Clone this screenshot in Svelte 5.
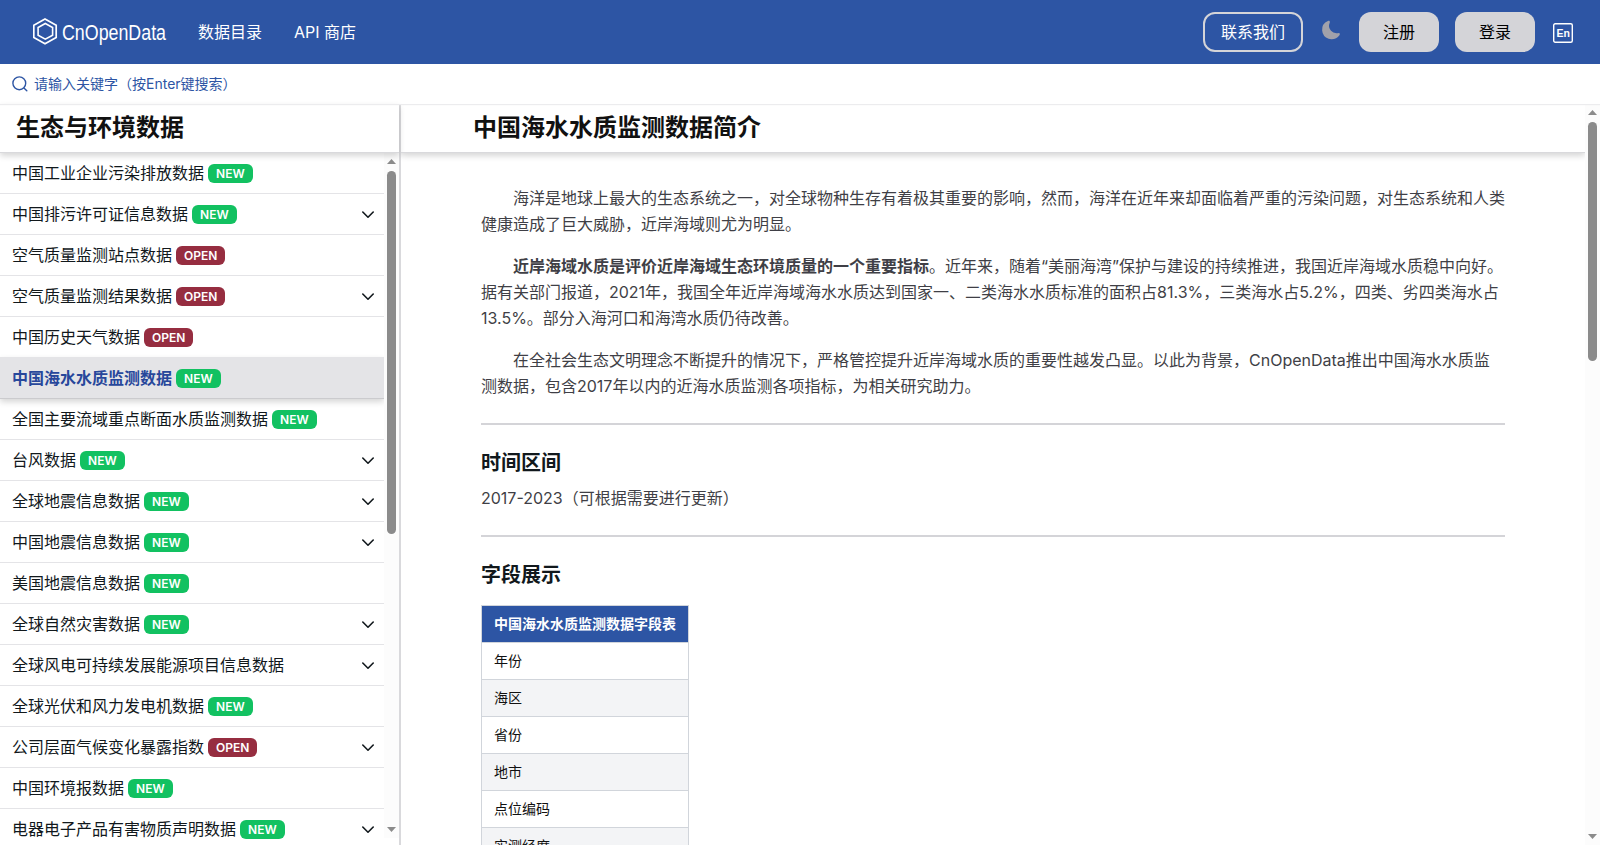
<script>
  let active = $state('中国海水水质监测数据');

  const menu = [
    { name: '中国工业企业污染排放数据', tag: 'new' },
    { name: '中国排污许可证信息数据', tag: 'new', children: true },
    { name: '空气质量监测站点数据', tag: 'open' },
    { name: '空气质量监测结果数据', tag: 'open', children: true },
    { name: '中国历史天气数据', tag: 'open' },
    { name: '中国海水水质监测数据', tag: 'new' },
    { name: '全国主要流域重点断面水质监测数据', tag: 'new' },
    { name: '台风数据', tag: 'new', children: true },
    { name: '全球地震信息数据', tag: 'new', children: true },
    { name: '中国地震信息数据', tag: 'new', children: true },
    { name: '美国地震信息数据', tag: 'new' },
    { name: '全球自然灾害数据', tag: 'new', children: true },
    { name: '全球风电可持续发展能源项目信息数据', children: true },
    { name: '全球光伏和风力发电机数据', tag: 'new' },
    { name: '公司层面气候变化暴露指数', tag: 'open', children: true },
    { name: '中国环境报数据', tag: 'new' },
    { name: '电器电子产品有害物质声明数据', tag: 'new', children: true }
  ];

  const fields = ['年份', '海区', '省份', '地市', '点位编码', '实测经度'];
</script>

{#snippet scrollbar(size)}
  <div class="scrollbar">
    <svg class="arrow" viewBox="0 0 9 5"><path d="M0 5 4.5 0 9 5z" /></svg>
    <div class="track"><div class="thumb" style="height: {size}px"></div></div>
    <svg class="arrow" viewBox="0 0 9 5"><path d="M0 0h9L4.5 5z" /></svg>
  </div>
{/snippet}

<div class="page">
  <header class="navbar">
    <svg class="logo" viewBox="0 0 136 30" width="136" height="30">
      <g fill="none" stroke="#fff">
        <path stroke-width="1.7" d="M12 1.9 23.2 8.2v12.3L12 26.8.8 20.5V8.2z" />
        <path stroke-width="1.6" d="M12.3 6.5 19.6 10.5v7.7l-7.3 4-7.2-4v-7.7z" />
      </g>
      <text x="29" y="22.5" textLength="104" lengthAdjust="spacingAndGlyphs">CnOpenData</text>
    </svg>
    <nav>
      <a href="#catalog">数据目录</a>
      <a href="#api">API 商店</a>
    </nav>
    <div class="actions">
      <button class="btn outline">联系我们</button>
      <svg class="moon" viewBox="0 0 24 24" width="22" height="22">
        <path
          d="M21.53 15.93c-.16-.27-.61-.69-1.73-.49a8.46 8.46 0 0 1-1.88.13 8.41 8.41 0 0 1-5.91-2.82 8.07 8.07 0 0 1-1.44-8.66c.44-1.01.13-1.54-.09-1.76s-.77-.55-1.83-.11a10.32 10.32 0 0 0-6.32 10.21 10.48 10.48 0 0 0 7.04 8.99 10 10 0 0 0 2.89.55c.16.01.32.02.48.02a10.5 10.5 0 0 0 8.47-4.27c.67-.93.49-1.52.32-1.79z"
        />
      </svg>
      <button class="btn solid">注册</button>
      <button class="btn solid">登录</button>
      <svg class="lang" viewBox="0 0 20 20" width="20" height="20">
        <rect x="0.7" y="0.7" width="18.6" height="18.6" rx="1.5" />
        <text x="3.4" y="14" textLength="13.4" lengthAdjust="spacingAndGlyphs">En</text>
      </svg>
    </div>
  </header>

  <div class="search">
    <svg viewBox="0 0 16 16" width="16" height="16">
      <circle cx="7.3" cy="7.3" r="6.4" />
      <path d="m12.2 12.2 2.6 2.6" />
    </svg>
    <span>请输入关键字（按Enter键搜索）</span>
  </div>

  <div class="body">
    <aside class="sidebar">
      <h2>生态与环境数据</h2>
      <div class="list">
        <ul>
          {#each menu as item}
            <li class:active={item.name === active}>
              <span class="name">{item.name}</span>
              {#if item.tag}
                <span class="tag {item.tag}">{item.tag.toUpperCase()}</span>
              {/if}
              {#if item.children}
                <svg class="chevron" viewBox="0 0 12 8" width="12" height="8">
                  <path d="m0.8 1 5.2 5.2L11.2 1" />
                </svg>
              {/if}
            </li>
          {/each}
        </ul>
        {@render scrollbar(363)}
      </div>
    </aside>

    <main>
      <div class="content">
        <h1>中国海水水质监测数据简介</h1>
        <article>
          <p class="indent">海洋是地球上最大的生态系统之一，对全球物种生存有着极其重要的影响，然而，海洋在近年来却面临着严重的污染问题，对生态系统和人类健康造成了巨大威胁，近岸海域则尤为明显。</p>
          <p class="indent"><strong>近岸海域水质是评价近岸海域生态环境质量的一个重要指标</strong>。近年来，随着“美丽海湾”保护与建设的持续推进，我国近岸海域水质稳中向好。据有关部门报道，2021年，我国全年近岸海域海水水质达到国家一、二类海水水质标准的面积占81.3%，三类海水占5.2%，四类、劣四类海水占13.5%。部分入海河口和海湾水质仍待改善。</p>
          <p class="indent">在全社会生态文明理念不断提升的情况下，严格管控提升近岸海域水质的重要性越发凸显。以此为背景，CnOpenData推出中国海水水质监测数据，包含2017年以内的近海水质监测各项指标，为相关研究助力。</p>
          <hr />
          <h3>时间区间</h3>
          <p class="range">2017-2023（可根据需要进行更新）</p>
          <hr />
          <h3>字段展示</h3>
          <table>
            <thead>
              <tr><th>中国海水水质监测数据字段表</th></tr>
            </thead>
            <tbody>
              {#each fields as field}
                <tr><td>{field}</td></tr>
              {/each}
            </tbody>
          </table>
        </article>
      </div>
      {@render scrollbar(239)}
    </main>
  </div>
</div>

<style>
  :global(body) {
    background: #fff;
  }
  .page {
    height: 861px;
    overflow: hidden;
    font-family: Inter, 'Noto Sans CJK SC', sans-serif;
    font-size: 16px;
    color: #11181c;
  }
  h1,
  h2,
  h3,
  p,
  ul {
    margin: 0;
    padding: 0;
  }

  .navbar {
    height: 64px;
    display: flex;
    align-items: center;
    background: #2d55a4;
    color: #fff;
  }
  .logo {
    margin-left: 33px;
  }
  .logo text {
    fill: #fff;
    font: 22.5px 'Liberation Sans', Arial, sans-serif;
  }
  nav {
    display: flex;
    gap: 32px;
    margin-left: 29px;
    padding-bottom: 2px;
  }
  nav a {
    color: #fff;
    text-decoration: none;
  }
  .actions {
    display: flex;
    align-items: center;
    margin-left: auto;
    padding-right: 27px;
  }
  .btn {
    box-sizing: border-box;
    height: 40px;
    padding: 0 0 2px;
    border: none;
    border-radius: 12px;
    font: inherit;
  }
  .outline {
    width: 100px;
    border: 2px solid #d4d4d8;
    background: transparent;
    color: #fff;
  }
  .solid {
    width: 80px;
    margin-right: 16px;
    background: #d4d4d8;
    color: #000;
  }
  .moon {
    margin: 0 17px 4px;
    fill: #a1a1aa;
  }
  .lang {
    margin: 1px 0 0 2px;
  }
  .lang rect {
    fill: none;
    stroke: #fff;
    stroke-width: 1.4;
  }
  .lang text {
    fill: #fff;
    font: bold 11.5px 'Liberation Sans', Arial, sans-serif;
  }

  .search {
    position: relative;
    z-index: 2;
    height: 40px;
    display: flex;
    align-items: center;
    gap: 6px;
    padding-left: 12px;
    font-size: 14px;
    color: #2d55a4;
    box-shadow: 0 1px 1px #ececee;
  }
  .search span {
    padding-bottom: 2px;
  }
  .search svg {
    fill: none;
    stroke: #2d55a4;
    stroke-width: 1.4;
    stroke-linecap: round;
  }

  .body {
    display: flex;
    height: 741px;
  }
  .sidebar {
    width: 399px;
    display: flex;
    flex-direction: column;
    border-right: 2px solid #d9d9dc;
  }
  h1,
  h2 {
    position: relative;
    z-index: 1;
    flex: none;
    height: 48px;
    line-height: 48px;
    font-size: 24px;
    font-weight: 600;
    color: #111;
    border-bottom: 1px solid #d9d9dc;
    box-shadow: 0 3px 6px rgba(0, 0, 0, 0.16);
  }
  h2 {
    padding-left: 16px;
  }
  .list {
    display: flex;
    height: 686px;
  }
  ul {
    flex: 1;
    list-style: none;
    overflow: hidden;
  }
  li {
    box-sizing: border-box;
    height: 41px;
    display: flex;
    align-items: center;
    padding: 0 10px 0 12px;
    border-bottom: 1px solid #e4e4e7;
  }
  li.active {
    height: 42px;
    margin-top: -1px;
    padding-top: 1px;
    background: #e4e4e7;
    border-bottom-color: #cbcbce;
    box-shadow: 0 3px 6px rgba(0, 0, 0, 0.16);
    color: #27479b;
    font-weight: 600;
  }
  .name {
    padding-bottom: 2px;
  }
  .tag {
    height: 19px;
    margin-left: 4px;
    padding: 0 8px;
    border-radius: 6px;
    font-size: 12px;
    line-height: 19px;
    font-weight: 600;
    color: #fff;
  }
  .new {
    background: #12c161;
  }
  .open {
    background: #962d40;
  }
  .chevron {
    margin-left: auto;
    padding-top: 1px;
    fill: none;
    stroke: #11181c;
    stroke-width: 1.6;
    stroke-linecap: round;
    stroke-linejoin: round;
  }

  .scrollbar {
    width: 15px;
    display: flex;
    flex-direction: column;
    align-items: center;
    background: #fcfcfc;
    padding: 6px 0;
    box-sizing: border-box;
  }
  .list .scrollbar {
    margin-bottom: 1px;
  }
  .arrow {
    width: 9px;
    height: 5px;
    fill: #8b8b8b;
  }
  .track {
    flex: 1;
    padding-top: 7px;
  }
  .thumb {
    width: 9px;
    border-radius: 5px;
    background: #8b8b8b;
  }

  main {
    flex: 1;
    display: flex;
  }
  .content {
    flex: 1;
    overflow: hidden;
  }
  h1 {
    padding-left: 72px;
  }
  article {
    width: 1024px;
    padding: 32px 0 0 80px;
    color: #3f3f46;
    line-height: 26px;
  }
  .indent {
    text-indent: 32px;
  }
  .indent + .indent {
    margin-top: 16px;
  }
  strong {
    font-weight: 600;
  }
  hr {
    height: 2px;
    margin: 24px 0;
    border: none;
    background: #d4d4d8;
  }
  h3 {
    font-size: 20px;
    line-height: 28px;
    font-weight: 600;
    color: #11181c;
  }
  .range {
    margin-top: 8px;
  }
  table {
    margin-top: 16px;
    border-collapse: collapse;
    font-size: 14px;
    line-height: 20px;
    color: #111;
  }
  th,
  td {
    padding: 8px 12px;
    border: 1px solid #d1d5db;
    text-align: left;
  }
  th {
    background: #2d55a4;
    color: #fff;
    font-weight: 600;
  }
  tbody tr:nth-child(even) {
    background: #f3f4f6;
  }
</style>
